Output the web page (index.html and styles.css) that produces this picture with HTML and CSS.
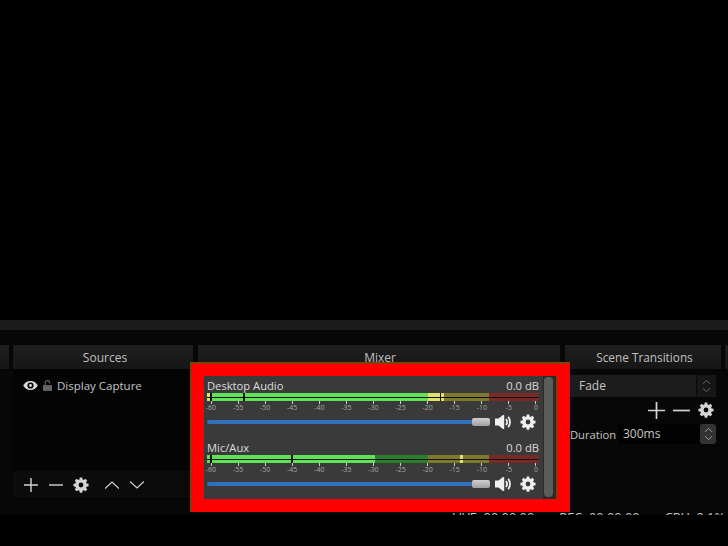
FILE: index.html
```html
<!DOCTYPE html>
<html lang="en">
<head>
    <meta charset="UTF-8">
    <title>Mixer</title>
    <link rel="stylesheet" href="styles.css">
</head>
<body>
    <svg class="defs" width="0" height="0">
        <symbol id="gear" viewBox="-1 -1 18 18">
            <path fill="currentColor" fill-rule="evenodd" d="M6.600-.5h2.800l.4 2.300 1.300.6 1.900-1.300 2 2-1.300 1.900.6 1.300 2.200.4v2.800l-2.200.4-.6 1.300 1.300 1.900-2 2-1.900-1.300-1.300.6-.4 2.300H6.600l-.4-2.300-1.300-.6L3 15.100l-2-2 1.300-1.900-.6-1.300-2.200-.4V6.700l2.200-.4.6-1.300L1 3.100l2-2 1.900 1.300 1.300-.6zM8 5.300a2.700 2.700 0 1 0 0 5.400 2.700 2.700 0 0 0 0-5.400z"/>
        </symbol>
        <symbol id="plus" viewBox="0 0 16 16">
            <path stroke="currentColor" stroke-width="1.600" fill="none" d="M8 0v16M0 8h16"/>
        </symbol>
        <symbol id="minus" viewBox="0 0 16 16">
            <path stroke="currentColor" stroke-width="1.600" fill="none" d="M0 8h16"/>
        </symbol>
        <symbol id="speaker" viewBox="0 0 16 16">
            <path fill="currentColor" d="M0 4.500h3.500L8 1h1.200v14H8l-4.500-3.500H0z"/>
            <path stroke="currentColor" stroke-width="1.800" fill="none" d="M11 5c1.300 1.800 1.300 4.200 0 6M13.200 2.800c2.400 3 2.400 7.400 0 10.400"/>
        </symbol>
        <symbol id="updown" viewBox="0 0 10 16">
            <path stroke="currentColor" stroke-width="1" fill="none" d="M1 5.500 5 1.500l4 4M1 10.500l4 4 4-4"/>
        </symbol>
    </svg>

    <div class="spacer"></div>
    <div class="window">
        <div class="top-strip"></div>
        <div class="docks">
            <section class="dock dock-scenes">
                <div class="dock-head"></div>
            </section>

            <section class="dock dock-sources">
                <div class="dock-head">Sources</div>
                <div class="dock-body">
                    <div class="source-row">
                        <svg class="eye" viewBox="0 0 16 12">
                            <path fill="#d8d8d8" fill-rule="evenodd" d="M0 6c2-3.400 4.800-5 8-5s6 1.600 8 5c-2 3.400-4.800 5-8 5S2 9.400 0 6zm8-3.400a3.400 3.400 0 1 0 0 6.800 3.400 3.400 0 0 0 0-6.800zM8 4.400a1.600 1.600 0 1 1 0 3.200 1.600 1.600 0 0 1 0-3.200z"/>
                        </svg>
                        <svg class="lock" viewBox="0 0 10 12">
                            <path fill="#636363" d="M0 5.500h10V12H0z"/>
                            <path stroke="#636363" stroke-width="1.300" fill="none" d="M2.500 5.500V3a2.500 2.500 0 0 1 5 0v.6"/>
                        </svg>
                        <span>Display Capture</span>
                    </div>
                    <div class="toolbar sources-toolbar">
                        <svg class="tool"><use href="#plus"/></svg>
                        <svg class="tool"><use href="#minus"/></svg>
                        <svg class="tool tool-gear"><use href="#gear"/></svg>
                        <svg class="tool chevron chevron-up" viewBox="0 0 14 8"><path stroke="currentColor" stroke-width="1.200" fill="none" d="M0 7.500 7 1l7 6.500"/></svg>
                        <svg class="tool chevron" viewBox="0 0 14 8"><path stroke="currentColor" stroke-width="1.200" fill="none" d="M0 .5 7 7l7-6.500"/></svg>
                    </div>
                </div>
            </section>

            <section class="dock dock-mixer">
                <div class="dock-head">Mixer</div>
            </section>

            <section class="dock dock-transitions">
                <div class="dock-head">Scene Transitions</div>
                <div class="transition-body">
                    <div class="combo">
                        <span class="combo-text">Fade</span>
                        <span class="combo-arrows"><svg class="updown"><use href="#updown"/></svg></span>
                    </div>
                    <div class="toolbar transition-toolbar">
                        <svg class="tool"><use href="#plus"/></svg>
                        <svg class="tool"><use href="#minus"/></svg>
                        <svg class="tool tool-gear"><use href="#gear"/></svg>
                    </div>
                    <div class="duration">
                        <span class="duration-label">Duration</span>
                        <span class="duration-field">300ms</span>
                        <span class="spin"><svg class="updown"><use href="#updown"/></svg></span>
                    </div>
                </div>
            </section>

            <section class="dock dock-rest">
                <div class="dock-head"></div>
            </section>
        </div>
        <div class="statusbar">
            <span class="stat">LIVE: 00:00:00</span>
            <span class="stat">REC: 00:00:00</span>
            <span class="stat">CPU: 2.1%</span>
        </div>

        <!-- red annotation box sits over the mixer dock -->
        <div class="highlight">
            <div class="mixer">
                <div class="channels">
                    <div class="channel">
                        <div class="channel-head"><span>Desktop Audio</span><span>0.0 dB</span></div>
                        <div class="meter">
                            <div class="meter-row">
                                <i class="seg yellow" style="width:3px"></i><i class="seg off" style="width:2px"></i><i class="seg green" style="width:31px"></i><i class="seg off" style="width:2px"></i><i class="seg green" style="width:183px"></i><i class="seg yellow" style="width:12px"></i><i class="seg off" style="width:1px"></i><i class="seg yellow" style="width:3px"></i><i class="seg olive" style="width:45px"></i><i class="seg red" style="width:50px"></i>
                            </div>
                            <div class="meter-row">
                                <i class="seg yellow" style="width:3px"></i><i class="seg off" style="width:2px"></i><i class="seg green" style="width:31px"></i><i class="seg off" style="width:2px"></i><i class="seg green" style="width:183px"></i><i class="seg yellow" style="width:12px"></i><i class="seg off" style="width:1px"></i><i class="seg yellow" style="width:3px"></i><i class="seg olive" style="width:45px"></i><i class="seg red" style="width:50px"></i>
                            </div>
                        </div>
                        <div class="scale">
                            <span>-60</span><span>-55</span><span>-50</span><span>-45</span><span>-40</span><span>-35</span><span>-30</span><span>-25</span><span>-20</span><span>-15</span><span>-10</span><span>-5</span><span>0</span>
                        </div>
                        <div class="controls">
                            <div class="slider"><div class="handle"></div></div>
                            <svg class="speaker"><use href="#speaker"/></svg>
                            <svg class="channel-gear"><use href="#gear"/></svg>
                        </div>
                    </div>
                    <div class="channel">
                        <div class="channel-head"><span>Mic/Aux</span><span>0.0 dB</span></div>
                        <div class="meter">
                            <div class="meter-row">
                                <i class="seg green" style="width:3px"></i><i class="seg off" style="width:2px"></i><i class="seg green" style="width:79px"></i><i class="seg off" style="width:2px"></i><i class="seg green" style="width:82px"></i><i class="seg dimgreen" style="width:53px"></i><i class="seg olive" style="width:32px"></i><i class="seg yellow" style="width:3px"></i><i class="seg olive" style="width:26px"></i><i class="seg red" style="width:50px"></i>
                            </div>
                            <div class="meter-row">
                                <i class="seg green" style="width:3px"></i><i class="seg off" style="width:2px"></i><i class="seg green" style="width:79px"></i><i class="seg off" style="width:2px"></i><i class="seg green" style="width:82px"></i><i class="seg dimgreen" style="width:53px"></i><i class="seg olive" style="width:32px"></i><i class="seg yellow" style="width:3px"></i><i class="seg olive" style="width:26px"></i><i class="seg red" style="width:50px"></i>
                            </div>
                        </div>
                        <div class="scale">
                            <span>-60</span><span>-55</span><span>-50</span><span>-45</span><span>-40</span><span>-35</span><span>-30</span><span>-25</span><span>-20</span><span>-15</span><span>-10</span><span>-5</span><span>0</span>
                        </div>
                        <div class="controls">
                            <div class="slider"><div class="handle"></div></div>
                            <svg class="speaker"><use href="#speaker"/></svg>
                            <svg class="channel-gear"><use href="#gear"/></svg>
                        </div>
                    </div>
                </div>
                <div class="scrollbar"><div class="thumb"></div></div>
            </div>
        </div>
    </div>
</body>
</html>
```

FILE: styles.css
```css
html, body {
    margin: 0;
    height: 546px;
    overflow: hidden;
    background: #000;
}
body {
    font-family: "Open Sans", "Noto Sans", sans-serif;
    font-size: 12px;
    color: #c6c6c6;
}
.defs {
    position: absolute;
}
.spacer {
    height: 320px;
}
.window {
    position: relative;
    height: 195px;
    overflow: hidden;
    background: #070707;
}
.top-strip {
    height: 10px;
    background: #1b1b1b;
}
.docks {
    display: flex;
    gap: 4px;
    margin-top: 15px;
    height: 155px;
}
.dock {
    display: flex;
    flex-direction: column;
    flex: none;
}
.dock-scenes {
    width: 9px;
}
.dock-sources {
    width: 180px;
}
.dock-mixer {
    width: 362px;
    margin-left: 1px;
}
.dock-transitions {
    width: 156px;
    margin-left: 1px;
}
.dock-rest {
    width: 20px;
}
.dock-head {
    height: 24px;
    line-height: 25px;
    text-align: center;
    background: linear-gradient(#1f1f1f, #161616);
    color: #c0c0c0;
    flex: none;
}
.dock-sources .dock-head {
    padding-left: 4px;
}
.dock-mixer .dock-head {
    padding-left: 2px;
}
.dock-transitions .dock-head {
    padding-left: 3px;
    font-size: 11.8px;
}
.dock-body {
    display: flex;
    flex-direction: column;
    justify-content: space-between;
    height: 131px;
    background: #040404;
}
.source-row {
    display: flex;
    align-items: center;
    height: 20px;
    margin-top: 6px;
    padding-left: 10px;
    font-size: 11.5px;
}
.eye {
    width: 15px;
    height: 11px;
}
.lock {
    width: 9px;
    height: 11px;
    margin-left: 5px;
    margin-right: 5px;
}
.toolbar {
    display: flex;
    align-items: center;
    color: #d4d4d4;
}
.sources-toolbar {
    height: 27px;
    padding-left: 11px;
    margin-bottom: 2px;
    gap: 11px;
    background: #0b0b0b;
}
.tool {
    width: 14px;
    height: 14px;
    flex: none;
}
.sources-toolbar .tool-gear {
    width: 16px;
    height: 16px;
    margin-left: -1px;
}
.chevron {
    height: 8px;
    width: 14px;
}
.chevron-up {
    margin-left: 5px;
}
.transition-body {
    padding-top: 6px;
}
.combo {
    display: flex;
    height: 22px;
    width: 151px;
    background: #1c1c1c;
    line-height: 22px;
}
.combo-text {
    flex: 1;
    padding-left: 14px;
}
.combo-arrows {
    display: flex;
    align-items: center;
    justify-content: center;
    width: 19px;
    background: #171717;
    border-left: 1px solid #0a0a0a;
    color: #777;
}
.updown {
    width: 9px;
    height: 14px;
}
.transition-toolbar {
    justify-content: flex-end;
    gap: 8px;
    margin-top: 5px;
    height: 16px;
    width: 149px;
}
.transition-toolbar .tool {
    width: 17px;
    height: 17px;
}
.transition-toolbar .tool-gear {
    width: 16px;
    height: 16px;
}
.duration {
    display: flex;
    align-items: center;
    margin-top: 6px;
    height: 20px;
    padding-left: 5px;
    white-space: nowrap;
}
.duration-label {
    width: 48px;
    font-size: 11.2px;
}
.duration-field {
    width: 77px;
    height: 20px;
    line-height: 20px;
    padding-left: 5px;
    background: #020202;
}
.spin {
    display: flex;
    align-items: center;
    justify-content: center;
    width: 16px;
    height: 20px;
    border-radius: 3px;
    background: #333;
    color: #aaa;
}
.statusbar {
    display: flex;
    gap: 25px;
    position: absolute;
    right: 3px;
    top: 188px;
    font-size: 12.8px;
    white-space: nowrap;
}
.highlight {
    position: absolute;
    left: 190px;
    top: 42px;
    width: 380px;
    height: 150px;
    box-sizing: border-box;
    padding: 13px 0 0 13px;
    background: #f00;
    border-top: 1px solid #0a7a0a;
    border-left: 1px solid #0a7a0a;
}
.mixer {
    display: flex;
    height: 123px;
    width: 352px;
    background: #3a3a3a;
    color: #dcdcdc;
    border-right: 1px solid #0a7a0a;
}
.channels {
    width: 339px;
    flex: none;
    padding-left: 3px;
    box-sizing: border-box;
}
.channel {
    height: 62px;
}
.channel-head {
    display: flex;
    justify-content: space-between;
    height: 17px;
    line-height: 19px;
    padding-right: 4px;
    font-size: 11.2px;
}
.meter {
    display: flex;
    flex-direction: column;
    gap: 1px;
    width: 332px;
    height: 8px;
    background: #111;
}
.meter-row {
    display: flex;
    height: 4px;
}
.meter-row + .meter-row {
    height: 3px;
}
.seg {
    display: block;
    flex: none;
}
.green {
    background: #5fe255;
}
.dimgreen {
    background: #2c7f2c;
}
.yellow {
    background: #e3e06a;
}
.olive {
    background: #7d7a2e;
}
.red {
    background: #772a26;
}
.off {
    background: #111;
}
.scale {
    display: flex;
    justify-content: space-between;
    width: 339px;
    margin-left: -3px;
    font-size: 7px;
    color: #a8a8a8;
    line-height: 8px;
}
.scale span {
    width: 14px;
    text-align: center;
    padding-top: 3px;
    background: linear-gradient(#ccc, #ccc) center top / 1px 3px no-repeat;
}
.controls {
    display: flex;
    align-items: center;
    height: 16px;
    margin-top: 2px;
    color: #f0f0f0;
}
.slider {
    position: relative;
    width: 283px;
    height: 4px;
    flex: none;
    border-radius: 2px;
    background: #2f71bd;
}
.handle {
    position: absolute;
    right: 0;
    top: -2px;
    width: 18px;
    height: 8px;
    border-radius: 2px;
    background: linear-gradient(#d0d0d0, #a0a0a0);
}
.speaker {
    width: 16px;
    height: 16px;
    margin-left: 5px;
    flex: none;
}
.channel-gear {
    width: 16px;
    height: 16px;
    margin-left: 9px;
    flex: none;
}
.scrollbar {
    width: 13px;
    height: 123px;
    background: #2a2a2a;
    padding: 1px 0 0 1px;
    box-sizing: border-box;
}
.thumb {
    width: 9px;
    height: 120px;
    border-radius: 4px;
    background: #5c5c5c;
}
```
